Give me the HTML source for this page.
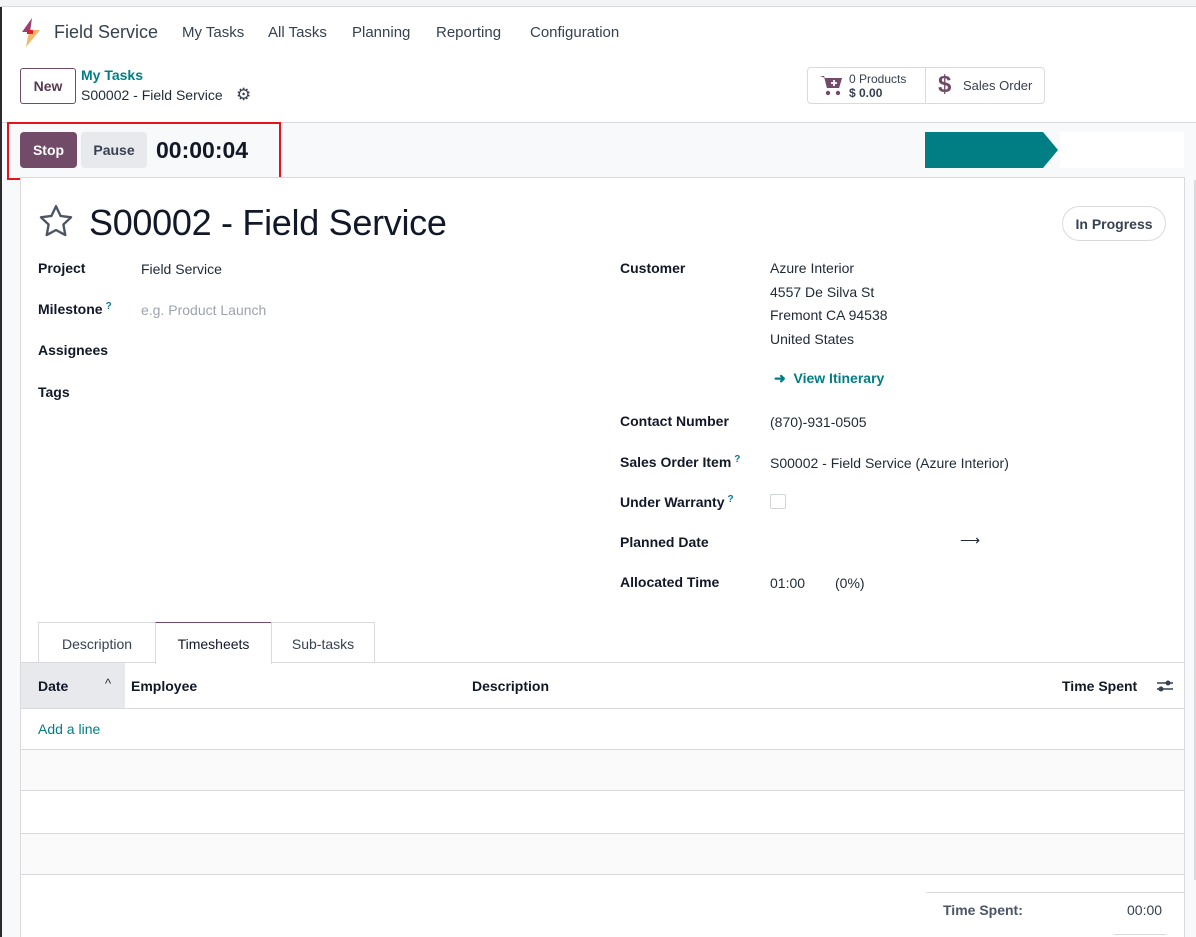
<!DOCTYPE html>
<html><head><meta charset="utf-8"><style>
*{box-sizing:border-box;margin:0;padding:0}
body{width:1196px;height:937px;overflow:hidden;background:#fff;font-family:"Liberation Sans",sans-serif;color:#1f2937;font-size:14px;position:relative}
.a{position:absolute;white-space:nowrap}
.lbl{font-weight:bold;color:#111827}
.sup{color:#0e7490;font-size:10px;vertical-align:top;margin-left:3px}
</style></head><body>
<div class="a" style="left:0;top:0;width:1196px;height:7px;background:#f3f4f6;border-bottom:1px solid #d8dadd"></div>
<div class="a" style="left:0;top:7px;width:2px;height:930px;background:#2b2b2b"></div>
<!-- nav -->
<svg class="a" style="left:20px;top:18px" width="22" height="30" viewBox="0 0 22 30"><polygon points="12,0 2,14 10,14" fill="#9c3f6e"/><polygon points="10,12 20,12 6,29 8,18" fill="#f4b86a"/><rect x="7" y="12" width="6" height="4" fill="#e0202a"/></svg>
<div class="a" style="left:54px;top:22px;font-size:18px;color:#374151">Field Service</div>
<div class="a" style="left:182px;top:24px;font-size:15px;color:#374151">My Tasks</div>
<div class="a" style="left:268px;top:24px;font-size:15px;color:#374151">All Tasks</div>
<div class="a" style="left:352px;top:24px;font-size:15px;color:#374151">Planning</div>
<div class="a" style="left:436px;top:24px;font-size:15px;color:#374151">Reporting</div>
<div class="a" style="left:530px;top:24px;font-size:15px;color:#374151">Configuration</div>
<!-- control panel -->
<div class="a" style="left:20px;top:68px;width:56px;height:36px;border:1px solid #714b67;border-radius:3px;font-weight:bold;font-size:14px;text-align:center;line-height:34px;color:#5a3a52">New</div>
<div class="a" style="left:81px;top:67px;color:#017e84;font-weight:bold;font-size:14px">My Tasks</div>
<div class="a" style="left:81px;top:87px;font-size:14px;color:#1f2937">S00002 - Field Service</div>
<div class="a" style="left:236px;top:85px;font-size:17px;color:#374151">⚙</div>
<div class="a" style="left:807px;top:67px;width:238px;height:37px;border:1px solid #d8dadd;border-radius:4px"></div>
<div class="a" style="left:925px;top:67px;width:1px;height:37px;background:#d8dadd"></div>
<svg class="a" style="left:820px;top:75px" width="24" height="22" viewBox="0 0 24 22"><path d="M0 1h4l3 12h12l3-10H5z" fill="#714b67"/><path d="M4 1l3 12h12l3-10H5z" fill="#714b67"/><circle cx="8" cy="18" r="2.2" fill="#714b67"/><circle cx="18" cy="18" r="2.2" fill="#714b67"/><path d="M14 5v6M11 8h6" stroke="#fff" stroke-width="1.8"/></svg>
<div class="a" style="left:849px;top:72px;font-size:12px;color:#374151;line-height:14px">0 Products<br><b>$ 0.00</b></div>
<div class="a" style="left:938px;top:71px;font-size:24px;font-weight:bold;color:#714b67">$</div>
<div class="a" style="left:963px;top:78px;font-size:13px;color:#374151">Sales Order</div>
<!-- status bar -->
<div class="a" style="left:2px;top:122px;width:1194px;height:815px;background:#f8f9fa;border-top:1px solid #d8dadd"></div>
<div class="a" style="left:20px;top:132px;width:57px;height:36px;background:#714b67;border-radius:4px;color:#fff;font-weight:bold;text-align:center;line-height:37px">Stop</div>
<div class="a" style="left:81px;top:132px;width:66px;height:36px;background:#e7e9ed;border-radius:4px;color:#374151;font-weight:bold;text-align:center;line-height:37px">Pause</div>
<div class="a" style="left:156px;top:137px;font-size:23px;font-weight:bold;color:#111827">00:00:04</div>
<div class="a" style="left:7px;top:122px;width:274px;height:58px;border:2px solid #e8121c"></div>
<div class="a" style="left:1060px;top:132px;width:124px;height:36px;background:#fff"></div>
<svg class="a" style="left:925px;top:132px" width="150" height="36"><polygon points="0,0 118,0 133,18 118,36 0,36" fill="#017e84"/><polygon points="133,0 136,0 151,18 136,36 133,36 148,18" fill="#fff"/></svg>
<!-- sheet -->
<div class="a" style="left:20px;top:177px;width:1165px;height:760px;background:#fff;border:1px solid #d8dadd;border-bottom:none"></div>
<svg class="a" style="left:38px;top:204px" width="36" height="34" viewBox="0 0 24 23"><path d="M12 1.5l3.1 6.6 7.1.9-5.2 4.9 1.3 7.1L12 17.6 5.7 21l1.3-7.1L1.8 9l7.1-.9z" fill="none" stroke="#4b5563" stroke-width="1.6" stroke-linejoin="round"/></svg>
<div class="a" style="left:89px;top:202px;font-size:36px;letter-spacing:-0.3px;color:#111827">S00002 - Field Service</div>
<div class="a" style="left:1062px;top:206px;width:104px;height:35px;border:1px solid #d8dadd;border-radius:18px;text-align:center;line-height:34px;font-weight:bold;color:#374151">In Progress</div>
<div class="a lbl" style="left:38px;top:260px">Project</div>
<div class="a" style="left:141px;top:261px">Field Service</div>
<div class="a lbl" style="left:38px;top:301px">Milestone<span class="sup">?</span></div>
<div class="a" style="left:141px;top:302px;color:#9ca3af">e.g. Product Launch</div>
<div class="a lbl" style="left:38px;top:342px">Assignees</div>
<div class="a lbl" style="left:38px;top:384px">Tags</div>
<div class="a lbl" style="left:620px;top:260px">Customer</div>
<div class="a" style="left:770px;top:257px;line-height:23.5px">Azure Interior<br>4557 De Silva St<br>Fremont CA 94538<br>United States</div>
<div class="a" style="left:774px;top:370px;color:#017e84;font-weight:bold">➜&nbsp; View Itinerary</div>
<div class="a lbl" style="left:620px;top:413px">Contact Number</div>
<div class="a" style="left:770px;top:414px">(870)-931-0505</div>
<div class="a lbl" style="left:620px;top:454px">Sales Order Item<span class="sup">?</span></div>
<div class="a" style="left:770px;top:455px">S00002 - Field Service (Azure Interior)</div>
<div class="a lbl" style="left:620px;top:494px">Under Warranty<span class="sup">?</span></div>
<div class="a" style="left:770px;top:494px;width:16px;height:15px;border:1px solid #d1d5db;border-radius:2px"></div>
<div class="a lbl" style="left:620px;top:534px">Planned Date</div>
<div class="a" style="left:960px;top:532px;font-size:14px">⟶</div>
<div class="a lbl" style="left:620px;top:574px">Allocated Time</div>
<div class="a" style="left:770px;top:575px">01:00</div>
<div class="a" style="left:835px;top:575px">(0%)</div>
<!-- tabs -->
<div class="a" style="left:21px;top:662px;width:1163px;height:1px;background:#d8dadd"></div>
<div class="a" style="left:38px;top:622px;width:118px;height:41px;border:1px solid #d8dadd;border-bottom:none;text-align:center;line-height:42px;color:#374151">Description</div>
<div class="a" style="left:155px;top:622px;width:117px;height:42px;border:1px solid #d8dadd;border-top:1px solid #714b67;border-bottom:none;background:#fff;text-align:center;line-height:42px;color:#111827">Timesheets</div>
<div class="a" style="left:271px;top:622px;width:104px;height:41px;border:1px solid #d8dadd;border-bottom:none;text-align:center;line-height:42px;color:#374151">Sub-tasks</div>
<!-- table -->
<div class="a" style="left:21px;top:663px;width:104px;height:45px;background:#e7e9ed"></div>
<div class="a lbl" style="left:38px;top:678px">Date</div>
<div class="a" style="left:105px;top:676px;font-size:13px">^</div>
<div class="a lbl" style="left:131px;top:678px">Employee</div>
<div class="a lbl" style="left:472px;top:678px">Description</div>
<div class="a lbl" style="left:1062px;top:678px">Time Spent</div>
<svg class="a" style="left:1156px;top:678px" width="18" height="16"><path d="M1 5h16M1 11h16" stroke="#374151" stroke-width="1.5"/><circle cx="12" cy="5" r="2.5" fill="#374151"/><circle cx="5" cy="11" r="2.5" fill="#374151"/></svg>
<div class="a" style="left:21px;top:708px;width:1163px;height:1px;background:#d8dadd"></div>
<div class="a" style="left:38px;top:721px;color:#017e84">Add a line</div>
<div class="a" style="left:21px;top:749px;width:1163px;height:42px;background:#fafafa;border-top:1px solid #d8dadd;border-bottom:1px solid #d8dadd"></div>
<div class="a" style="left:21px;top:833px;width:1163px;height:42px;background:#fafafa;border-top:1px solid #d8dadd;border-bottom:1px solid #d8dadd"></div>
<div class="a" style="left:926px;top:892px;width:258px;height:1px;background:#d8dadd"></div>
<div class="a lbl" style="left:943px;top:902px;color:#4b5563">Time Spent:</div>
<div class="a" style="left:1127px;top:902px;color:#374151">00:00</div>
<div class="a" style="left:1114px;top:934px;width:52px;height:1px;background:#d8dadd"></div>
<div class="a" style="left:1194px;top:180px;width:2px;height:700px;background:#d8dadd"></div>
</body></html>
